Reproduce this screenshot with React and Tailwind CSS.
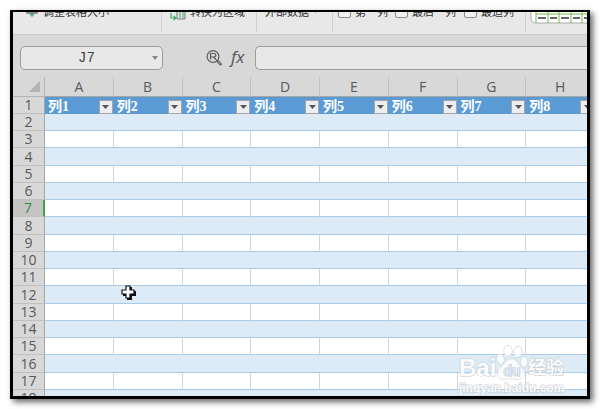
const columns = ['A', 'B', 'C', 'D', 'E', 'F', 'G', 'H'];
const rows = Array.from({ length: 17 }, (_, i) => i + 2);
const selectedRow = 7;

function RowHead({ n }) {
    const active = n === selectedRow;
    return (
        <th
            scope="row"
            className={`border-b border-b-[#c0c0c0] p-0 text-center text-[14px] leading-[16px] font-normal ${
                active
                    ? 'border-r-2 border-r-[#3fa142] bg-[#c4c4c4] text-[#3a8a3e]'
                    : 'border-r border-r-[#a6a6a6] bg-[#d8d8d8] text-[#595959]'
            }`}
        >
            {n}
        </th>
    );
}

function Divider() {
    return <div className="h-full w-px shrink-0 bg-[#d0d0d0]" />;
}

function Check({ children, className }) {
    return (
        <label className={`flex shrink-0 items-start gap-1 ${className}`}>
            <input
                type="checkbox"
                className="mt-[5px] h-[13px] w-[13px] appearance-none rounded-[2px] border border-[#8c8c8c] bg-[#f0f0f0]"
            />
            <span className="mt-[6px]">{children}</span>
        </label>
    );
}

function Ribbon() {
    return (
        <div className="h-[23px] shrink-0 overflow-hidden border-b border-[#cbcbcb] bg-[#e8e8e8] font-['Liberation_Sans','Noto_Sans_CJK_SC',sans-serif] text-[11px] leading-[12px] text-[#333]">
            {/* scrolled up: only the lower edge of the commands is showing */}
            <div className="-mt-3 flex h-8">
                <button className="flex w-[148px] shrink-0 items-start pt-[6px] pl-3">
                    <svg viewBox="0 0 14 14" className="mr-1 size-[14px]" fill="none">
                        <path d="M2 3v4h10V3M7 1v7" stroke="#777" strokeWidth="1.5" />
                        <path d="M4 8h6l-3 3z" fill="#5fb583" />
                    </svg>
                    调整表格大小
                </button>
                <Divider />
                <button className="flex w-[94px] shrink-0 items-start pt-[6px] pl-2">
                    <svg viewBox="0 0 16 16" className="mr-1 size-4" fill="none">
                        <path d="M1 7v5h4M3.500 10L6 12l-2.500 2" stroke="#3fa76c" strokeWidth="1.2" />
                        <path d="M7 1h8v12H7z" stroke="#777" />
                        <path d="M10 3v9M13 3v9" stroke="#3fa76c" />
                    </svg>
                    转换为区域
                </button>
                <Divider />
                <button className="flex w-[75px] shrink-0 items-start gap-1 pt-[6px] pl-2">
                    外部数据
                    <svg viewBox="0 0 5 3" className="mt-1 h-[3px] w-[5px]">
                        <path d="M0 0h5L2.500 3z" fill="#777" />
                    </svg>
                </button>
                <Divider />
                <Check className="w-[57px] pl-[5px]">第一列</Check>
                <Check className="w-[69px] pl-[5px]">最后一列</Check>
                <Check className="w-[66px] pl-[5px]">最适列</Check>
                <Divider />
                <svg viewBox="0 0 70 24" className="h-6 w-[70px] shrink-0" fill="none">
                    <path d="M70 0H5v18q0 5 5 5h60" fill="#fff" stroke="#a8a8a8" />
                    <path d="M10 14h60M10 0v23M22 0v23M33 0v23M45 0v23M56 0v23M68 0v23" stroke="#76b84e" />
                    <path d="M12 18h8M24 18h7M35 18h8M47 18h7M58 18h8" stroke="#333" strokeWidth="1.300" />
                </svg>
            </div>
        </div>
    );
}

function FormulaBar() {
    return (
        <div className="flex h-[42px] shrink-0 items-start pt-[11px] pl-[7px]">
            <div className="flex h-6 w-[143px] shrink-0 items-center rounded-[5px] border border-[#9c9c9c] bg-[#e8e8e8] pr-1">
                <input
                    aria-label="Name box"
                    defaultValue="J7"
                    className="w-full min-w-0 bg-transparent text-center font-['Liberation_Mono',monospace] text-[14px] text-[#444] outline-none"
                />
                <svg viewBox="0 0 6 4" className="h-1 w-[6px] shrink-0">
                    <path d="M0 0h6L3 4z" fill="#888" />
                </svg>
            </div>
            <button aria-label="Find" className="mt-1 ml-[43px]">
                <svg viewBox="0 0 16 16" className="size-4" fill="none" stroke="#5c5c5c">
                    <circle cx="7" cy="6.500" r="5.900" strokeWidth="1.200" />
                    <path d="M4.500 9.500V3.500H8q1.800 0 1.800 1.700T8 7H4.500M7.500 7L10 9.500" strokeWidth="1.200" />
                    <path d="M11.300 10.800l3.200 3.200" strokeWidth="2.600" strokeLinecap="round" />
                    <path d="M11.800 11.300l2.500 2.500" stroke="#d8d8d8" strokeWidth="0.800" />
                </svg>
            </button>
            <button
                aria-label="Insert function"
                className="ml-[9px] w-6 shrink-0 text-left text-[17px] leading-[22px] text-[#555] italic"
            >
                fx
            </button>
            <input
                aria-label="Formula"
                className="h-6 min-w-0 flex-1 rounded-l-[5px] border border-r-0 border-[#9c9c9c] bg-[#e8e8e8] outline-none"
            />
        </div>
    );
}

function Sheet() {
    return (
        <div className="-mr-2">
            <table className="w-full table-fixed border-separate border-spacing-0">
                <colgroup>
                    <col className="w-8" />
                </colgroup>
                <thead>
                    <tr className="h-5">
                        <td className="border-r border-b border-[#b4b4b4] p-0">
                            <svg viewBox="0 0 11 11" className="ml-4 size-[11px]">
                                <path d="M11 0v11H0z" fill="#b2b2b2" />
                            </svg>
                        </td>
                        {columns.map((c) => (
                            <th
                                key={c}
                                scope="col"
                                className="border-r border-b border-r-[#c2c2c2] border-b-[#a6a6a6] p-0 text-[14px] leading-[19px] font-normal text-[#595959]"
                            >
                                {c}
                            </th>
                        ))}
                    </tr>
                </thead>
                <tbody>
                    <tr className="h-[17px]">
                        <RowHead n={1} />
                        {columns.map((c, i) => (
                            <th key={c} scope="col" className="bg-[#5b9bd5] p-0">
                                <div className="flex h-[17px] items-center justify-between pt-[2px] pr-px pl-[3px] font-['Liberation_Serif','Noto_Sans_CJK_SC',serif] text-[14px] leading-[14px] font-bold text-white">
                                    <span className="whitespace-nowrap">列{i + 1}</span>
                                    <button
                                        aria-label={`Filter ${i + 1}`}
                                        className="flex h-[14px] w-[14px] items-center justify-center border border-[#a5a5a5] bg-[#eeeef2]"
                                    >
                                        <svg viewBox="0 0 7 4" className="h-1 w-[7px]">
                                            <path d="M0 0h7L3.500 4z" fill="#555" />
                                        </svg>
                                    </button>
                                </div>
                            </th>
                        ))}
                    </tr>
                    {rows.map((n) => (
                        <tr key={n} className={n % 4 === 0 ? 'h-[18px]' : 'h-[17px]'}>
                            <RowHead n={n} />
                            {columns.map((c) => (
                                <td
                                    key={c}
                                    className={`border-b border-b-[#a9cbea] p-0 ${
                                        n % 2 ? 'border-r border-r-[#d4d4d4] bg-white' : 'bg-[#dcebf6]'
                                    }`}
                                />
                            ))}
                        </tr>
                    ))}
                </tbody>
            </table>
        </div>
    );
}

function Watermark() {
    return (
        <div className="pointer-events-none absolute right-5 bottom-0 w-[108px] font-['Liberation_Sans','Noto_Sans_CJK_SC',sans-serif] font-bold text-white/90 [paint-order:stroke_fill] [-webkit-text-stroke:1px_#c3cad1]">
            <div className="flex h-[36px] items-end">
                <span className="w-[37px] text-[24px] leading-[24px]">Bai</span>
                <svg viewBox="0 0 32 36" className="h-9 w-8 shrink-0" fill="#fff" fillOpacity="0.8" stroke="#c9d0d6">
                    <ellipse cx="4.500" cy="15" rx="3.500" ry="5" transform="rotate(-12 4.500 15)" />
                    <ellipse cx="12" cy="7" rx="4" ry="5.500" />
                    <ellipse cx="22" cy="8" rx="4" ry="5.500" transform="rotate(10 22 8)" />
                    <ellipse cx="28" cy="18" rx="3.500" ry="5" />
                    <path d="M16 15c5 0 6 5 9 8 7 6 3 12-3 12-3 0-9-1-13 0-8 1-10-7-4-12 4-3 5-8 11-8z" />
                    <text x="16" y="32" textAnchor="middle" fontSize="14" fill="#dcebf6" stroke="#b9c6d2">
                        du
                    </text>
                </svg>
                <span className="text-[18px] leading-[24px] whitespace-nowrap">经验</span>
            </div>
            <div className="text-[12px] leading-[16px]">jingyan.baidu.com</div>
        </div>
    );
}

export default function App() {
    return (
        <div className="h-screen bg-white p-[10px] font-['Open_Sans','Noto_Sans_CJK_SC',sans-serif]">
            <div className="relative flex h-full flex-col overflow-hidden border-x-[3px] border-t-2 border-b-[3px] border-black bg-[#d8d8d8] shadow-[3px_3px_6px_rgba(0,0,0,0.6)]">
                <Ribbon />
                <FormulaBar />
                <Sheet />
                <svg
                    viewBox="0 0 15 15"
                    className="absolute top-[273px] left-[108px] size-[15px]"
                    fill="#fff"
                    stroke="#111"
                    strokeWidth="1.200"
                >
                    <path d="M6 2h5v4h4v5h-4v4H6v-4H2V6h4z" fill="#111" stroke="none" />
                    <path d="M5 1h4v4h4v4H9v4H5V9H1V5h4z" />
                </svg>
                <Watermark />
            </div>
        </div>
    );
}
